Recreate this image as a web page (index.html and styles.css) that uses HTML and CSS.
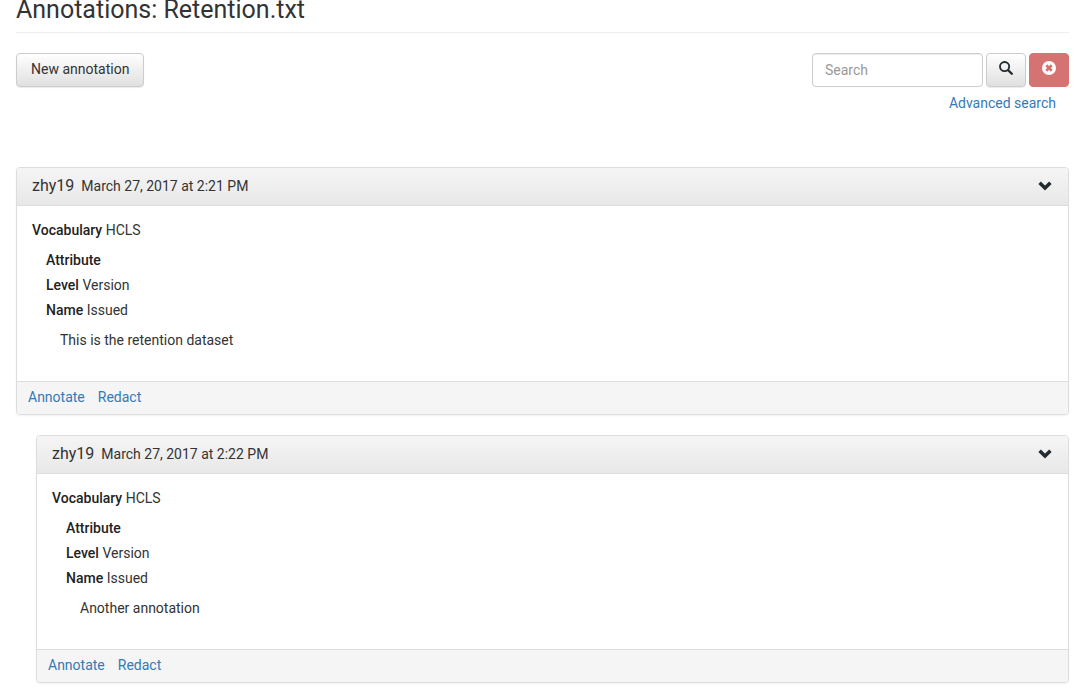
FILE: index.html
```html
<!DOCTYPE html>
<html lang="en">
<head>
<meta charset="utf-8">
<title>Annotations: Retention.txt</title>
<link rel="stylesheet" href="styles.css">
</head>
<body>
<main class="page">
  <h1 class="page-title">Annotations: Retention.txt</h1>
  <div class="toolbar">
    <button class="btn" type="button">New annotation</button>
    <form class="search">
      <div class="search-row">
        <input class="search-input" type="text" placeholder="Search" aria-label="Search">
        <button class="btn btn-icon" type="button" aria-label="Search">
          <svg class="icon" viewBox="0 0 14 14"><circle cx="5.6" cy="5.6" r="4.6" fill="none" stroke="#222b30" stroke-width="1.8"/><path d="M9.2 9.2l3.6 3.6" stroke="#222b30" stroke-width="2.3" stroke-linecap="round"/></svg>
        </button>
        <button class="btn btn-icon btn-danger" type="button" aria-label="Clear search">
          <svg class="icon" viewBox="0 0 14 14"><circle cx="7" cy="7" r="7" fill="#fff"/><path d="M4.3 4.3l5.4 5.4M9.7 4.3L4.3 9.7" stroke="#d57372" stroke-width="2.7"/></svg>
        </button>
      </div>
      <a class="link advanced" href="#">Advanced search</a>
    </form>
  </div>

  <article class="card">
    <header class="card-head">
      <span class="author">zhy19</span>
      <time class="date">March 27, 2017 at 2:21 PM</time>
      <button class="toggle" type="button" aria-label="Collapse"><svg class="chevron" viewBox="0 0 14 10"><path d="M1.6 1.8l5.4 5.2 5.4-5.2" fill="none" stroke="#222b30" stroke-width="3.5"/></svg></button>
    </header>
    <div class="card-body">
      <p class="vocabulary"><b>Vocabulary</b> HCLS</p>
      <div class="attributes">
        <p><b>Attribute</b></p>
        <p><b>Level</b> Version</p>
        <p><b>Name</b> Issued</p>
      </div>
      <p class="value">This is the retention dataset</p>
    </div>
    <footer class="card-foot"><a class="link" href="#">Annotate</a><a class="link" href="#">Redact</a></footer>
  </article>

  <article class="card reply">
    <header class="card-head">
      <span class="author">zhy19</span>
      <time class="date">March 27, 2017 at 2:22 PM</time>
      <button class="toggle" type="button" aria-label="Collapse"><svg class="chevron" viewBox="0 0 14 10"><path d="M1.6 1.8l5.4 5.2 5.4-5.2" fill="none" stroke="#222b30" stroke-width="3.5"/></svg></button>
    </header>
    <div class="card-body">
      <p class="vocabulary"><b>Vocabulary</b> HCLS</p>
      <div class="attributes">
        <p><b>Attribute</b></p>
        <p><b>Level</b> Version</p>
        <p><b>Name</b> Issued</p>
      </div>
      <p class="value">Another annotation</p>
    </div>
    <footer class="card-foot"><a class="link" href="#">Annotate</a><a class="link" href="#">Redact</a></footer>
  </article>
</main>
</body>
</html>
```

FILE: styles.css
```css
* { box-sizing: border-box; }
body {
  margin: 0;
  background: #fff;
  color: #333;
  font: 14px/20px Roboto, "Open Sans", sans-serif;
}
p { margin: 0; }
b { font-weight: 500; color: #222; }
.page { padding: 0 14px 12px 16px; }
.page-title {
  margin: 0 0 20px;
  padding-bottom: 12px;
  border-bottom: 1px solid #eee;
  font-size: 25px;
  line-height: 20px;
  font-weight: 400;
}
.toolbar {
  display: flex;
  justify-content: space-between;
  align-items: flex-start;
  margin-bottom: 54px;
}
.btn {
  height: 34px;
  padding: 0 14px 2px;
  border: 1px solid #ccc;
  border-radius: 4px;
  background: linear-gradient(#fff, #e0e0e0);
  box-shadow: 0 1px 1px rgba(0, 0, 0, .08);
  color: #333;
  font: inherit;
}
.btn-icon {
  display: flex;
  align-items: center;
  justify-content: center;
  width: 40px;
  padding: 0 0 4px;
}
.btn-danger { background: #d57372; border-color: #d57372; box-shadow: none; }
.icon { width: 14px; height: 14px; }
.search { display: flex; flex-direction: column; align-items: flex-end; gap: 6px; }
.search-row { display: flex; gap: 3px; }
.search-input {
  width: 171px;
  height: 34px;
  padding: 0 12px;
  border: 1px solid #ccc;
  border-radius: 4px;
  background: #fff;
  box-shadow: inset 0 1px 1px rgba(0, 0, 0, .07);
  color: #555;
  font: inherit;
}
.search-input::placeholder { color: #999; opacity: 1; }
.link { color: #337ab7; text-decoration: none; }
.advanced { margin-right: 13px; }
.card {
  margin-bottom: 20px;
  border: 1px solid #ddd;
  border-radius: 4px;
  background: #fff;
  box-shadow: 0 1px 2px rgba(0, 0, 0, .05);
}
.reply { margin: 0 0 0 20px; }
.card-head {
  display: flex;
  align-items: center;
  gap: 7px;
  height: 38px;
  padding: 0 16px 2px 15px;
  border-radius: 3px 3px 0 0;
  border-bottom: 1px solid #ddd;
  background: linear-gradient(#f5f5f5, #e8e8e8);
}
.author { font-size: 16px; }
.toggle { display: flex; margin-left: auto; padding: 0; border: 0; background: none; }
.chevron { width: 14px; height: 10px; }
.card-body { padding: 14px 15px 31px; }
.attributes {
  display: grid;
  gap: 5px;
  margin: 10px 0 10px 14px;
}
.value { margin-left: 28px; }
.card-foot {
  display: flex;
  gap: 13px;
  padding: 5px 11px 7px;
  border-top: 1px solid #ddd;
  border-radius: 0 0 3px 3px;
  background: #f5f5f5;
}
```
